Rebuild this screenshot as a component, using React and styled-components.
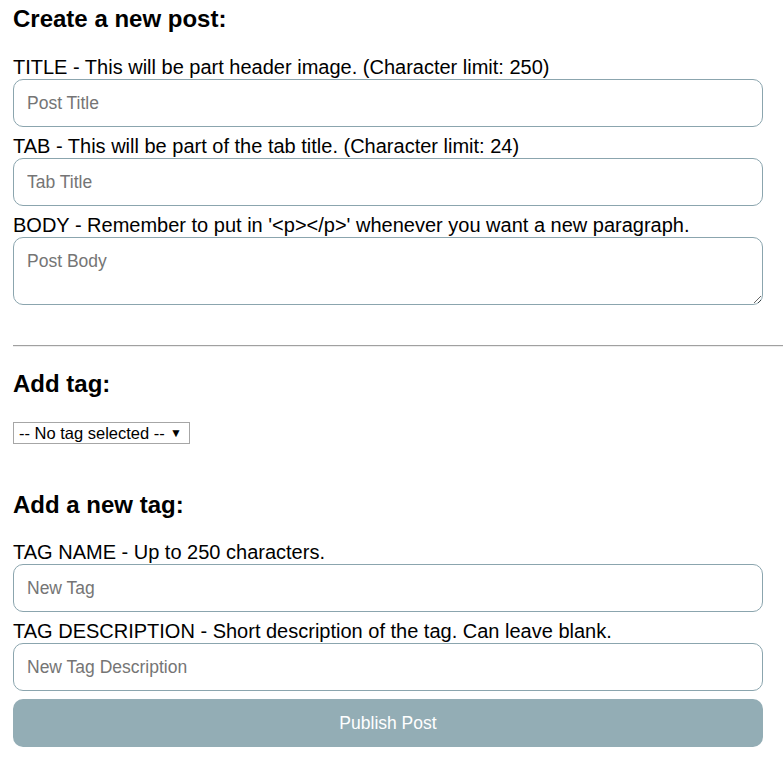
import React from "react";
import styled, { createGlobalStyle } from "styled-components";

const GlobalStyle = createGlobalStyle`
  body {
    margin: 0;
    background: #ffffff;
    font-family: "Liberation Sans", Arial, sans-serif;
    color: #000;
  }
`;

const Page = styled.form`
  display: flex;
  flex-direction: column;
  padding: 5px 0 20px 13px;
`;

const Heading = styled.h2`
  margin: 0 0 ${(props) => props.gap || 24}px;
  font-size: 24px;
  line-height: 27px;
  font-weight: bold;
`;

const Label = styled.label`
  display: block;
  font-size: 20px;
  line-height: 22px;
  margin-bottom: 1px;
`;

const Input = styled.input`
  box-sizing: border-box;
  width: 750px;
  height: 48px;
  margin: 0 0 8px;
  padding: 0 13px;
  border: 1px solid #8ba5ae;
  border-radius: 10px;
  font-family: inherit;
  font-size: 17.5px;
  color: #000;
  outline: none;

  &::placeholder {
    color: #757575;
  }
`;

const TextArea = styled(Input).attrs({ as: "textarea" })`
  height: 68px;
  padding: 13px;
  line-height: 20px;
  resize: vertical;
`;

const Divider = styled.hr`
  margin: 32px 0 23px;
  height: 0;
  border: none;
  border-top: 1px solid #a0a0a0;
  border-bottom: 1px solid #ededed;
`;

const SelectBox = styled.label`
  align-self: flex-start;
  box-sizing: border-box;
  display: inline-flex;
  align-items: center;
  width: 177px;
  height: 22px;
  margin-bottom: 47px;
  padding: 0 7px 0 5px;
  border: 1px solid #a6a6a6;
  background: #fff;
`;

const Select = styled.select`
  flex: 1;
  appearance: none;
  border: none;
  background: transparent;
  padding: 0;
  font-family: inherit;
  font-size: 16.5px;
  color: #000;
  outline: none;
`;

const Arrow = styled.span`
  font-size: 12px;
  line-height: 1;
`;

const Button = styled.button`
  box-sizing: border-box;
  width: 750px;
  height: 48px;
  border: none;
  border-radius: 10px;
  background: #93adb5;
  color: #fff;
  font-family: inherit;
  font-size: 17.5px;
  cursor: pointer;
`;

export default function App() {
  return (
    <>
      <GlobalStyle />
      <Page onSubmit={(e) => e.preventDefault()}>
        <Heading>Create a new post:</Heading>

        <Label>TITLE - This will be part header image. (Character limit: 250)</Label>
        <Input type="text" placeholder="Post Title" />

        <Label>TAB - This will be part of the tab title. (Character limit: 24)</Label>
        <Input type="text" placeholder="Tab Title" />

        <Label>
          BODY - Remember to put in '&lt;p&gt;&lt;/p&gt;' whenever you want a new
          paragraph.
        </Label>
        <TextArea placeholder="Post Body" />

        <Divider />

        <Heading gap={25}>Add tag:</Heading>
        <SelectBox>
          <Select defaultValue="">
            <option value="">-- No tag selected --</option>
          </Select>
          <Arrow>▼</Arrow>
        </SelectBox>

        <Heading gap={23}>Add a new tag:</Heading>

        <Label>TAG NAME - Up to 250 characters.</Label>
        <Input type="text" placeholder="New Tag" />

        <Label>TAG DESCRIPTION - Short description of the tag. Can leave blank.</Label>
        <Input type="text" placeholder="New Tag Description" />

        <Button type="submit">Publish Post</Button>
      </Page>
    </>
  );
}
